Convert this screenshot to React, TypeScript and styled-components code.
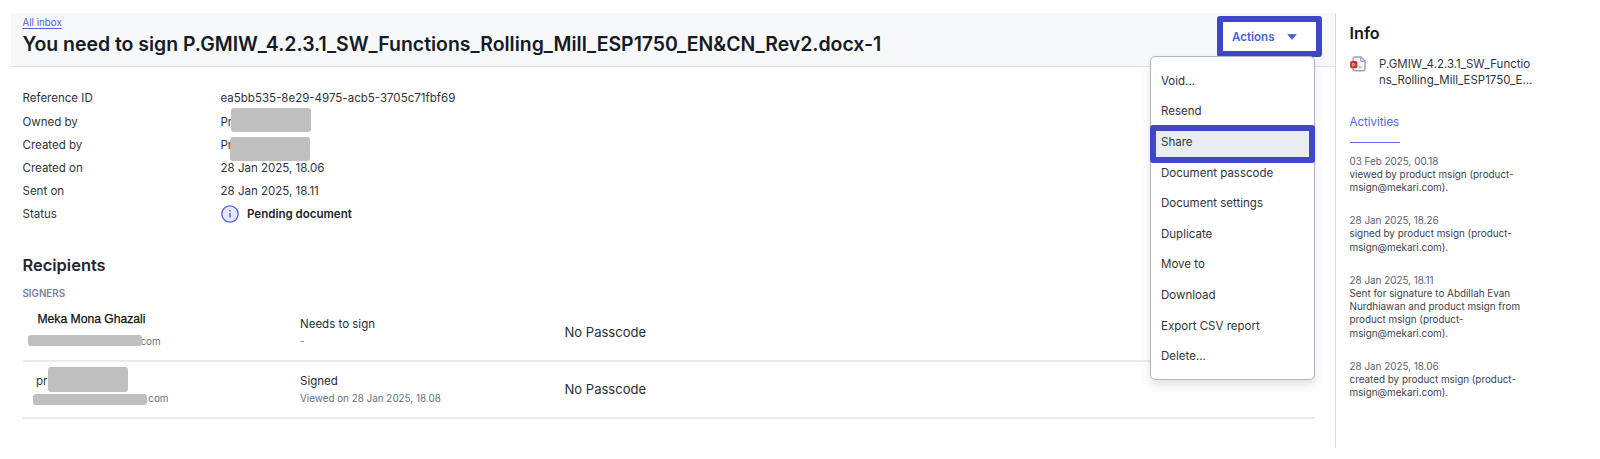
import React from "react";
import styled, { createGlobalStyle } from "styled-components";

const GlobalStyle = createGlobalStyle`
  * { box-sizing: border-box; }
  body {
    margin: 0;
    background: #fff;
    color: #31353b;
    font-family: Inter, "Liberation Sans", sans-serif;
    font-size: 11.53px;
  }
  h1, h2, p, ul, dl, dd, dt { margin: 0; padding: 0; }
`;

const Page = styled.div`
  display: flex;
  height: 459px;
  padding: 13px 0 11px 11px;
  overflow: hidden;
`;

const Main = styled.main`
  width: 1324px;
  flex: none;
`;

const Header = styled.header`
  display: flex;
  justify-content: space-between;
  height: 54px;
  padding: 3px 12px 0 11.5px;
  background: #f7f8fa;
  border-bottom: 1px solid #e0e3eb;
`;

const BackLink = styled.a`
  display: block;
  width: max-content;
  color: #5063dc;
  font-size: 9.75px;
  line-height: 14px;
  text-decoration: underline;
  text-underline-offset: 1.5px;
`;

const Title = styled.h1`
  margin-top: 2px;
  color: #151a24;
  font-size: 19.43px;
  font-weight: 600;
  line-height: 24px;
  white-space: nowrap;
`;

const ActionsWrap = styled.div`
  position: relative;
  height: 42px;
  margin-right: 1px;
`;

const ActionsButton = styled.button`
  display: flex;
  align-items: center;
  gap: 12px;
  width: 105.5px;
  height: 41px;
  padding: 0 0 0 9.5px;
  border: 6px solid #4046ca;
  border-radius: 3px;
  background: #fff;
  color: #4a5fdc;
  font: 600 11.55px Inter, sans-serif;
`;

const Menu = styled.ul`
  position: absolute;
  z-index: 2;
  top: 39.5px;
  right: 7px;
  width: 165px;
  height: 324px;
  padding-top: 9px;
  border: 1px solid #adb5c2;
  border-radius: 5px;
  background: #fff;
  box-shadow: 0 5px 10px rgba(40, 50, 70, 0.14);
  list-style: none;
`;

const MenuItem = styled.li<{ $active?: boolean }>`
  display: flex;
  align-items: center;
  height: ${(p) => (p.$active ? 38 : 30.6)}px;
  margin: ${(p) => (p.$active ? "-1.5px -1px -5.9px -1px" : "0")};
  padding: ${(p) => (p.$active ? "0 0 4px 5px" : "0 0 0 10px")};
  border: ${(p) => (p.$active ? "6px solid #4046ca" : "0")};
  border-radius: 3px;
  background: ${(p) => (p.$active ? "#e9edf0" : "transparent")};
`;

const Details = styled.dl`
  display: grid;
  grid-template-columns: 198px 1fr;
  grid-auto-rows: 23.2px;
  align-items: center;
  padding: 19.9px 0 0 11.5px;
`;

const Value = styled.dd`
  display: flex;
  align-items: center;
  position: relative;
`;

const Status = styled.strong`
  display: flex;
  align-items: center;
  gap: 8.5px;
  color: #22262c;
  font-weight: 600;
`;

const Redaction = styled.span<{ $x: number; $y: number; $w: number; $h: number }>`
  position: absolute;
  left: ${(p) => p.$x}px;
  top: ${(p) => p.$y}px;
  width: ${(p) => p.$w}px;
  height: ${(p) => p.$h}px;
  border-radius: 3px;
  background: #bfbfbf;
`;

const Recipients = styled.section`
  padding: 26.5px 20px 0 11.5px;
`;

const SectionTitle = styled.h2`
  color: #22262e;
  font-size: 16.45px;
  font-weight: 600;
  line-height: 24px;
`;

const GroupLabel = styled.p`
  margin: 10px 0 4.5px;
  color: #78839a;
  font-size: 9.8px;
  font-weight: 600;
  line-height: 14px;
`;

const SignerRow = styled.div`
  display: grid;
  grid-template-columns: 277.5px 264.5px 1fr;
  height: 57px;
  border-bottom: 2px solid #e8ecf1;
`;

const Identity = styled.div<{ $indent: number; $top: number }>`
  position: relative;
  padding: ${(p) => p.$top}px 0 0 ${(p) => p.$indent}px;
`;

const PlainName = styled.p`
  color: #111;
  font: 12.15px/14px "Liberation Sans", Arial, sans-serif;
  -webkit-text-stroke: 0.25px #111;
`;

const Name = styled.p`
  line-height: 14px;
`;

const Email = styled.p<{ $x: number; $gap: number }>`
  margin: ${(p) => p.$gap}px 0 0 ${(p) => p.$x}px;
  color: #667085;
  font-size: 9.85px;
  line-height: 13px;
`;

const SignState = styled.div`
  padding-top: 11.5px;
`;

const StateLabel = styled.p`
  color: #2a2e34;
  line-height: 14px;
`;

const StateNote = styled.p`
  margin-top: 4.5px;
  color: #667085;
  font-size: 9.87px;
  line-height: 13px;
`;

const Passcode = styled.p`
  align-self: center;
  margin-top: -1.5px;
  color: #2a2e34;
  font-size: 13.05px;
`;

const Sidebar = styled.aside`
  width: 220px;
  padding: 8.5px 0 0 13.5px;
  border-left: 1px solid #d5dae2;
`;

const InfoTitle = styled.h2`
  color: #15181d;
  font-size: 16.2px;
  font-weight: 600;
  line-height: 22px;
`;

const FileRow = styled.div`
  display: flex;
  gap: 13.5px;
  margin-top: 12px;
  font-size: 11.48px;
  line-height: 16.6px;
`;

const FileIcon = styled.svg`
  flex: none;
  margin-top: 0.5px;
`;

const Tab = styled.div`
  width: 50.5px;
  height: 28.5px;
  margin-top: 25.5px;
  border-bottom: 1px solid #5b6be6;
  color: #5566e2;
  line-height: 16px;
`;

const Feed = styled.div`
  margin-top: 12px;
`;

const Activity = styled.div`
  margin-bottom: 19.7px;
  color: #3c424b;
  font-size: 9.87px;
  line-height: 13.25px;
  white-space: nowrap;
`;

const When = styled.p`
  color: #586274;
`;

const menu = ["Void...", "Resend", "Share", "Document passcode", "Document settings", "Duplicate", "Move to", "Download", "Export CSV report", "Delete..."];

const activities = [
  { when: "03 Feb 2025, 00.18", lines: ["viewed by product msign (product-", "msign@mekari.com)."] },
  { when: "28 Jan 2025, 18.26", lines: ["signed by product msign (product-", "msign@mekari.com)."] },
  { when: "28 Jan 2025, 18.11", lines: ["Sent for signature to Abdillah Evan", "Nurdhiawan and product msign from", "product msign (product-", "msign@mekari.com)."] },
  { when: "28 Jan 2025, 18.06", lines: ["created by product msign (product-", "msign@mekari.com)."] },
];

export default function App() {
  return (
    <>
      <GlobalStyle />
      <Page>
        <Main>
          <Header>
            <div>
              <BackLink>All inbox</BackLink>
              <Title>You need to sign P.GMIW_4.2.3.1_SW_Functions_Rolling_Mill_ESP1750_EN&amp;CN_Rev2.docx-1</Title>
            </div>
            <ActionsWrap>
              <ActionsButton>
                Actions
                <svg width="10" height="6" viewBox="0 0 10 6">
                  <path d="M.8.5h8.4L5 5.4z" fill="#4a5fdc" stroke="#4a5fdc" strokeWidth=".7" strokeLinejoin="round" />
                </svg>
              </ActionsButton>
              <Menu>
                {menu.map((item) => (
                  <MenuItem key={item} $active={item === "Share"}>{item}</MenuItem>
                ))}
              </Menu>
            </ActionsWrap>
          </Header>

          <Details>
            <dt>Reference ID</dt>
            <Value>ea5bb535-8e29-4975-acb5-3705c71fbf69</Value>
            <dt>Owned by</dt>
            <Value>Pr<Redaction $x={10.5} $y={-6.7} $w={80} $h={24.5} /></Value>
            <dt>Created by</dt>
            <Value>Pr<Redaction $x={9.5} $y={-1} $w={80} $h={24.5} /></Value>
            <dt>Created on</dt>
            <Value>28 Jan 2025, 18.06</Value>
            <dt>Sent on</dt>
            <Value>28 Jan 2025, 18.11</Value>
            <dt>Status</dt>
            <Value>
              <Status>
                <svg width="18" height="18" viewBox="0 0 18 18">
                  <circle cx="9" cy="9" r="8.2" fill="#e3e8fb" stroke="#5063dc" strokeWidth="1.3" />
                  <path d="M9 8v4.6M9 5v1.5" stroke="#5063dc" strokeWidth="1.4" />
                </svg>
                Pending document
              </Status>
            </Value>
          </Details>

          <Recipients>
            <SectionTitle>Recipients</SectionTitle>
            <GroupLabel>SIGNERS</GroupLabel>
            <SignerRow>
              <Identity $indent={15} $top={6.5}>
                <PlainName>Meka Mona Ghazali</PlainName>
                <Email $x={103} $gap={9}>com</Email>
                <Redaction $x={5} $y={30} $w={114} $h={10.5} />
              </Identity>
              <SignState>
                <StateLabel>Needs to sign</StateLabel>
                <StateNote>-</StateNote>
              </SignState>
              <Passcode>No Passcode</Passcode>
            </SignerRow>
            <SignerRow>
              <Identity $indent={13.5} $top={11.5}>
                <Name>pr</Name>
                <Email $x={109.5} $gap={4.5}>.com</Email>
                <Redaction $x={25} $y={5} $w={80} $h={25} />
                <Redaction $x={10} $y={32} $w={114} $h={10.5} />
              </Identity>
              <SignState>
                <StateLabel>Signed</StateLabel>
                <StateNote>Viewed on 28 Jan 2025, 18.08</StateNote>
              </SignState>
              <Passcode>No Passcode</Passcode>
            </SignerRow>
          </Recipients>
        </Main>

        <Sidebar>
          <InfoTitle>Info</InfoTitle>
          <FileRow>
            <FileIcon width="16" height="16" viewBox="0 0 16 16">
              <path d="M4.5 1H11l4 4v7.500a2.200 2.200 0 0 1-2.200 2.200H5.200A2.200 2.200 0 0 1 3 12.500V2.500A1.500 1.500 0 0 1 4.500 1z" fill="#f7f8fb" stroke="#9aa5b8" strokeWidth="1.400" strokeLinejoin="round" />
              <path d="M10.600 1.500v2.800a1 1 0 0 0 1 1h3M8.500 11.200h3" fill="none" stroke="#9aa5b8" strokeWidth="1.200" />
              <rect x=".2" y="5" width="7.200" height="7.200" rx="1.600" fill="#d02f2f" />
              <path d="M2.700 10.600v-3.600l2.500 1.600-2.300 1.300" fill="none" stroke="#f6c4c4" strokeWidth=".8" />
            </FileIcon>
            <div>
              P.GMIW_4.2.3.1_SW_Functio
              <br />
              ns_Rolling_Mill_ESP1750_E...
            </div>
          </FileRow>
          <Tab>Activities</Tab>
          <Feed>
            {activities.map((a) => (
              <Activity key={a.when}>
                <When>{a.when}</When>
                {a.lines.map((l) => (
                  <p key={l}>{l}</p>
                ))}
              </Activity>
            ))}
          </Feed>
        </Sidebar>
      </Page>
    </>
  );
}
